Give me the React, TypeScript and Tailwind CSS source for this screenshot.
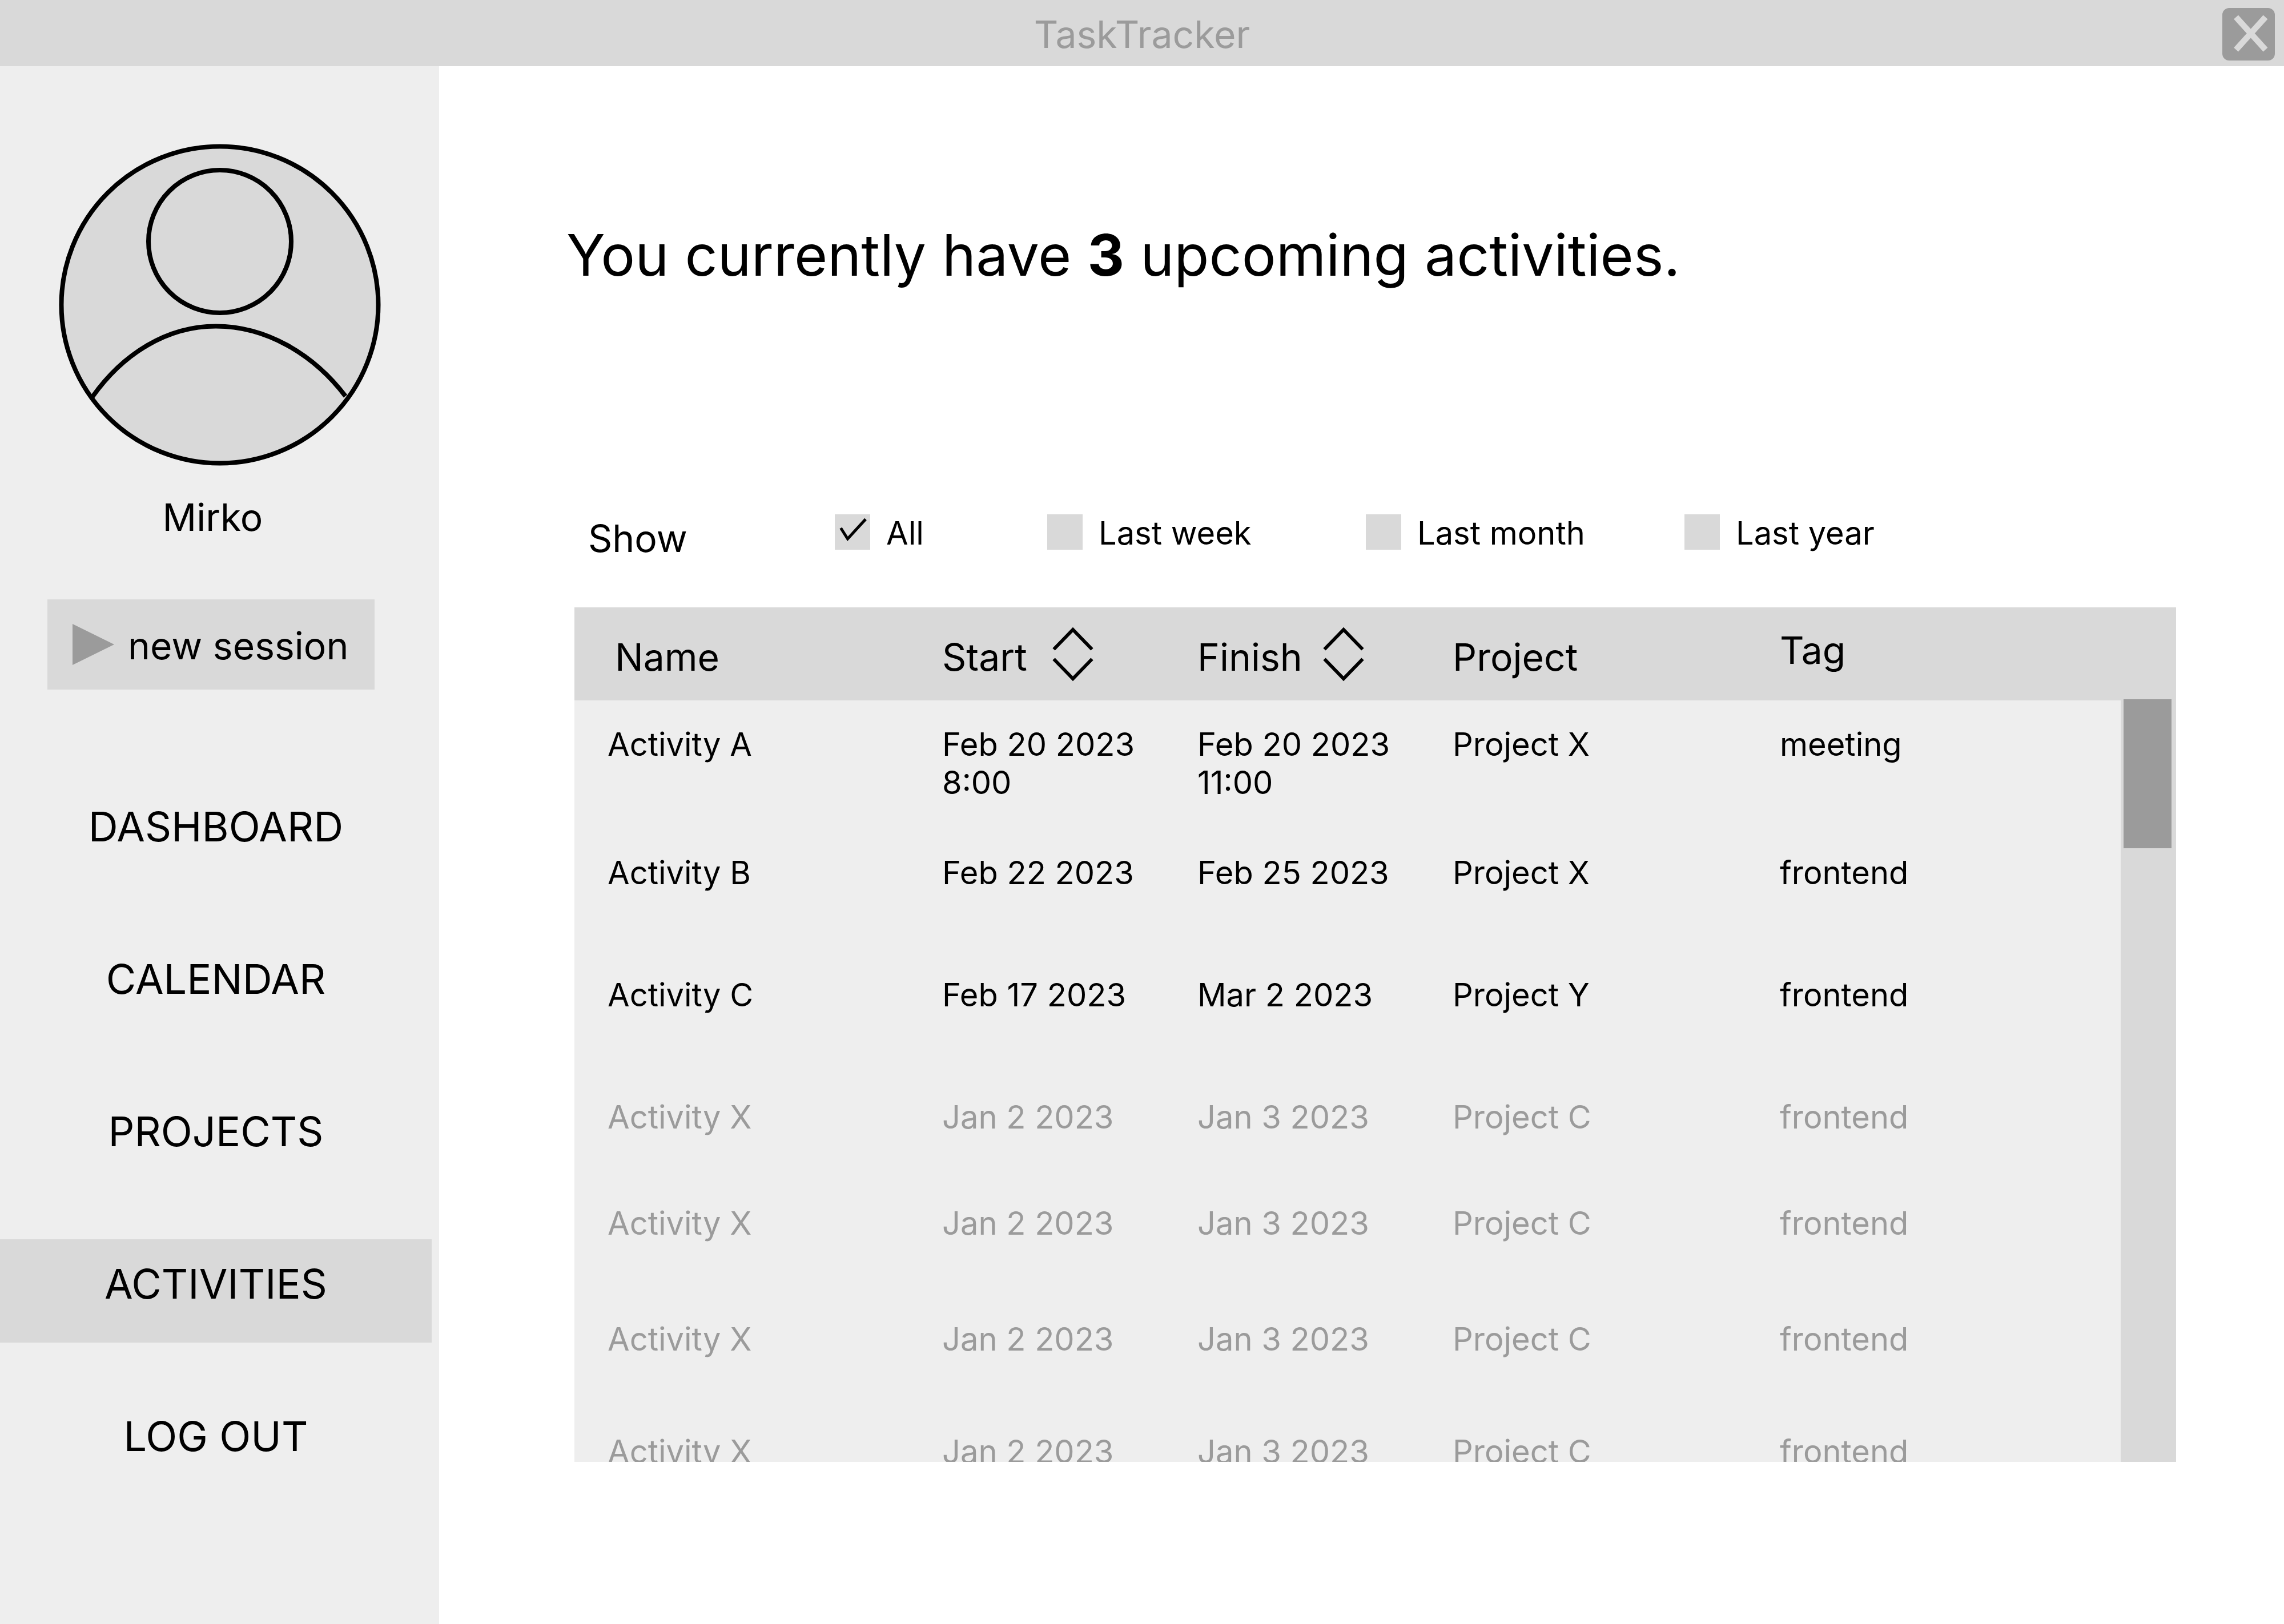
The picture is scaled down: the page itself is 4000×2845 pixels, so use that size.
import { useState } from "react";

type Activity = {
  name: string;
  start: string[];
  finish: string[];
  project: string;
  tag: string;
  past?: boolean;
  height: string;
};

const activities: Activity[] = [
  { name: "Activity A", start: ["Feb 20 2023", "8:00"], finish: ["Feb 20 2023", "11:00"], project: "Project X", tag: "meeting", height: "h-[225px]" },
  { name: "Activity B", start: ["Feb 22 2023"], finish: ["Feb 25 2023"], project: "Project X", tag: "frontend", height: "h-[214px]" },
  { name: "Activity C", start: ["Feb 17 2023"], finish: ["Mar 2 2023"], project: "Project Y", tag: "frontend", height: "h-[214px]" },
  { name: "Activity X", start: ["Jan 2 2023"], finish: ["Jan 3 2023"], project: "Project C", tag: "frontend", past: true, height: "h-[186px]" },
  { name: "Activity X", start: ["Jan 2 2023"], finish: ["Jan 3 2023"], project: "Project C", tag: "frontend", past: true, height: "h-[203px]" },
  { name: "Activity X", start: ["Jan 2 2023"], finish: ["Jan 3 2023"], project: "Project C", tag: "frontend", past: true, height: "h-[197px]" },
  { name: "Activity X", start: ["Jan 2 2023"], finish: ["Jan 3 2023"], project: "Project C", tag: "frontend", past: true, height: "h-[197px]" },
];

const navItems = ["DASHBOARD", "CALENDAR", "PROJECTS", "ACTIVITIES", "LOG OUT"];

const filters = [
  { label: "All", width: "w-[372px]" },
  { label: "Last week", width: "w-[558px]" },
  { label: "Last month", width: "w-[558px]" },
  { label: "Last year", width: "w-[400px]" },
];

function Avatar() {
  return (
    <svg className="h-[564px] w-[564px]" viewBox="0 0 564 564" fill="none" stroke="#000" strokeWidth="8" role="img" aria-label="Mirko">
      <circle cx="282" cy="282" r="277.5" fill="#d9d9d9" />
      <circle cx="282" cy="171" r="125" />
      <path d="M59 443C113 367 190 319.500 275 319.500C362 319.500 445 367 502 442" />
    </svg>
  );
}

function SortIcon() {
  return (
    <svg className="h-24 w-[72px]" viewBox="0 0 72 96" fill="none" stroke="#000" strokeWidth="6" aria-hidden="true">
      <path d="M2.500 39.500L36 5L69.500 39.500M2.500 56.500L36 91L69.500 56.500" />
    </svg>
  );
}

function Filter({ label, width, checked, onChange }: { label: string; width: string; checked: boolean; onChange: () => void }) {
  return (
    <label className={`flex items-center gap-7 pb-2 text-[56px] leading-[68px] ${width}`}>
      <span className="relative block size-[62px] shrink-0">
        <input type="checkbox" checked={checked} onChange={onChange} className="block size-full appearance-none bg-[#d9d9d9]" />
        {checked && (
          <svg className="pointer-events-none absolute inset-0" viewBox="0 0 62 62" fill="none" stroke="#000" strokeWidth="5" aria-hidden="true">
            <path d="M10.500 24L22.500 43L54 8.500" />
          </svg>
        )}
      </span>
      <span className="pt-1">{label}</span>
    </label>
  );
}

export default function App() {
  const [active, setActive] = useState("ACTIVITIES");
  const [shown, setShown] = useState("All");

  return (
    <div className="flex h-screen flex-col bg-white font-['Inter',sans-serif] text-black">
      <header className="grid h-[116px] shrink-0 grid-cols-[1fr_auto_1fr] items-center bg-[#d9d9d9] px-4">
        <h1 className="col-start-2 pt-1 text-[66px] leading-[81px] text-[#9b9b9b]">TaskTracker</h1>
        <button type="button" aria-label="Close" className="mt-1 size-[92px] justify-self-end rounded-xl bg-[#9b9b9b]">
          <svg viewBox="0 0 92 92" fill="none" stroke="#d9d9d9" strokeWidth="10.500" aria-hidden="true">
            <path d="M24 16L75.500 73M75.500 16L24 73" />
          </svg>
        </button>
      </header>

      <div className="flex min-h-0 flex-1">
        <aside className="flex w-[769px] shrink-0 flex-col bg-[#eee] pt-[136px]">
          <div className="flex justify-center">
            <Avatar />
          </div>
          <p className="mt-[50px] pr-6 text-center text-[66px] leading-[81px]">Mirko</p>
          <button type="button" className="mt-[103px] ml-[83px] flex h-[158px] w-[573px] items-center bg-[#d9d9d9] pl-11 text-[66px] leading-[81px]">
            <svg className="mr-6 h-[72px] w-[73px]" viewBox="0 0 73 72" fill="#9b9b9b" aria-hidden="true">
              <path d="M0 0L73 36L0 72Z" />
            </svg>
            <span className="pt-1">new session</span>
          </button>
          <nav className="mt-[162px] flex w-[756px] flex-col gap-[86px]">
            {navItems.map((item) => (
              <a
                key={item}
                href="#"
                aria-current={item === active ? "page" : undefined}
                onClick={() => setActive(item)}
                className={`block pt-[34px] pb-[60px] text-center text-[72px] leading-[87px] ${item === active ? "bg-[#d9d9d9]" : ""}`}
              >
                {item}
              </a>
            ))}
          </nav>
        </aside>

        <main className="flex min-w-0 flex-1 flex-col pr-[189px] pb-[284px] pl-[237px]">
          <h2 className="-ml-[14px] pt-[270px] text-[100px] leading-[121px]">
            You currently have <strong className="font-bold">3</strong> upcoming activities.
          </h2>

          <div role="group" aria-label="Filter activities" className="mt-[380px] flex items-center pl-6">
            <span className="w-[432px] pt-4 text-[66px] leading-[81px]">Show</span>
            {filters.map((f) => (
              <Filter key={f.label} label={f.label} width={f.width} checked={f.label === shown} onChange={() => setShown(f.label)} />
            ))}
          </div>

          <section className="relative mt-[80px] min-h-0 flex-1 overflow-hidden bg-[#eee]">
            <table className="w-full table-fixed text-left">
              <colgroup>
                <col className="w-[644px]" />
                <col className="w-[447px]" />
                <col className="w-[447px]" />
                <col className="w-[573px]" />
                <col />
              </colgroup>
              <thead className="bg-[#d9d9d9]">
                <tr className="h-[163px] text-[66px] leading-[81px]">
                  <th className="pt-3 pl-[71px] font-normal">Name</th>
                  <th className="font-normal">
                    <button type="button" className="flex items-center gap-11">
                      <span className="pt-3">Start</span>
                      <SortIcon />
                    </button>
                  </th>
                  <th className="font-normal">
                    <button type="button" className="flex items-center gap-9">
                      <span className="pt-3">Finish</span>
                      <SortIcon />
                    </button>
                  </th>
                  <th className="pt-3 font-normal">Project</th>
                  <th className="pb-3 font-normal">Tag</th>
                </tr>
              </thead>
              <tbody className="text-[56px] leading-[67px]">
                {activities.map((a, i) => (
                  <tr key={i} className={`align-top ${a.height} ${a.past ? "text-[#9b9b9b]" : ""}`}>
                    <td className="pt-11 pl-[58px]">{a.name}</td>
                    <td className="pt-11">
                      {a.start.map((line) => (
                        <div key={line}>{line}</div>
                      ))}
                    </td>
                    <td className="pt-11">
                      {a.finish.map((line) => (
                        <div key={line}>{line}</div>
                      ))}
                    </td>
                    <td className="pt-11">{a.project}</td>
                    <td className="pt-11">{a.tag}</td>
                  </tr>
                ))}
              </tbody>
            </table>
            <div className="absolute top-[161px] right-0 bottom-0 w-[97px] bg-[#d9d9d9] pr-2 pl-[5px]">
              <div className="h-[261px] bg-[#9b9b9b]" />
            </div>
          </section>
        </main>
      </div>
    </div>
  );
}
